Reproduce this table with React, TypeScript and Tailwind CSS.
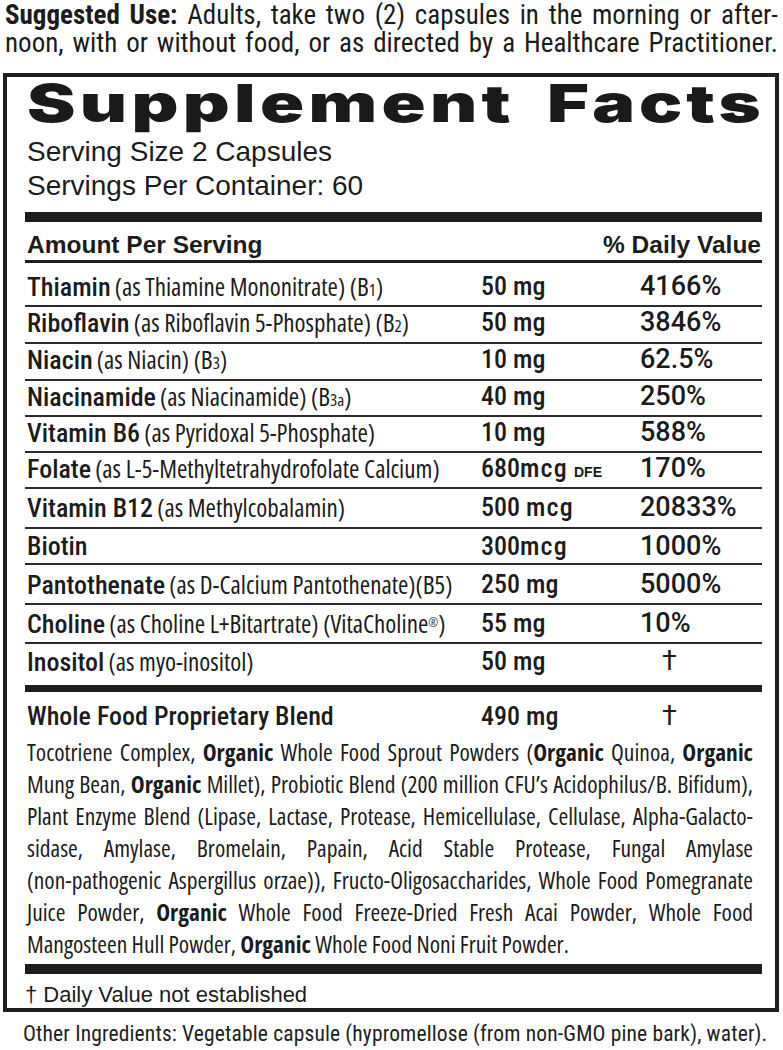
import React from "react";

type Row = {
  name: React.ReactNode;
  paren?: React.ReactNode;
  amt: React.ReactNode;
  dv: React.ReactNode;
  cls: string;
  dagger?: boolean;
};

const Sm = ({ children }: { children: React.ReactNode }) => (
  <span className="text-[17px]">{children}</span>
);

const Mcg = () => <span className="tracking-[1.2px]">mcg</span>;

const rows: Row[] = [
  {
    name: "Thiamin",
    paren: (
      <>
        (as Thiamine Mononitrate) (B<Sm>1</Sm>)
      </>
    ),
    amt: "50 mg",
    dv: "4166%",
    cls: "h-[44px] pt-[8px] border-b-2",
  },
  {
    name: "Riboflavin",
    paren: (
      <>
        (as Riboflavin 5-Phosphate) (B<Sm>2</Sm>)
      </>
    ),
    amt: "50 mg",
    dv: "3846%",
    cls: "h-[37px] pt-0 border-b-2",
  },
  {
    name: "Niacin",
    paren: (
      <>
        (as Niacin) (B<Sm>3</Sm>)
      </>
    ),
    amt: "10 mg",
    dv: "62.5%",
    cls: "h-[37px] pt-0 border-b-2",
  },
  {
    name: "Niacinamide",
    paren: (
      <>
        (as Niacinamide) (B<Sm>3a</Sm>)
      </>
    ),
    amt: "40 mg",
    dv: "250%",
    cls: "h-[36px] pt-0 border-b-2",
  },
  {
    name: "Vitamin B6",
    paren: "(as Pyridoxal 5-Phosphate)",
    amt: "10 mg",
    dv: "588%",
    cls: "h-[36px] pt-0 border-b-2",
  },
  {
    name: "Folate",
    paren: "(as L-5-Methyltetrahydrofolate Calcium)",
    amt: (
      <>
        680<Mcg />{" "}
        <span className="font-['Liberation_Sans',Arial,sans-serif] font-bold text-[14px]">DFE</span>
      </>
    ),
    dv: "170%",
    cls: "h-[36px] pt-0 border-b-2",
  },
  {
    name: "Vitamin B12",
    paren: "(as Methylcobalamin)",
    amt: (
      <>
        500 <Mcg />
      </>
    ),
    dv: "20833%",
    cls: "h-[40px] pt-[3px] border-b-2",
  },
  {
    name: "Biotin",
    amt: (
      <>
        300<Mcg />
      </>
    ),
    dv: "1000%",
    cls: "h-[36px] pt-[2px] border-b-2",
  },
  {
    name: "Pantothenate",
    paren: "(as D-Calcium Pantothenate)(B5)",
    amt: "250 mg",
    dv: "5000%",
    cls: "h-[40px] pt-[4px] border-b-2",
  },
  {
    name: "Choline",
    paren: (
      <>
        (as Choline L+Bitartrate) (VitaCholine
        <sup className="text-[12px]">®</sup>)
      </>
    ),
    amt: "55 mg",
    dv: "10%",
    cls: "h-[39px] pt-[3px] border-b-2",
  },
  {
    name: "Inositol",
    paren: "(as myo-inositol)",
    amt: "50 mg",
    dv: "†",
    dagger: true,
    cls: "h-[41px] pt-[2px]",
  },
];

const B = ({ children }: { children: React.ReactNode }) => (
  <span className="font-bold">{children}</span>
);

export default function App() {
  return (
    <div className="w-[783px] h-[1050px] overflow-hidden bg-white text-[#1c1c1c]">
      {/* Suggested use */}
      <div className="px-[5px] pt-[1px] font-['Roboto',sans-serif] font-stretch-[82%] text-[27px] leading-[28px]">
        <div className="text-justify [text-align-last:justify]">
          <span className="font-bold">Suggested Use:</span> Adults, take two (2) capsules in the morning or after-
        </div>
        <div className="text-justify [text-align-last:justify]">
          noon, with or without food, or as directed by a Healthcare Practitioner.
        </div>
      </div>

      {/* Box */}
      <div className="mt-[16px] ml-[3px] w-[776px] border-4 border-[#1e1e1e] pl-[18px] pr-[13px] flex flex-col">
        <div className="mt-[1px] h-[52px] pl-[2px] flex justify-between font-['Inter',sans-serif] font-black text-[52px] leading-[52px] text-[#1a1a1a]">
          <span className="inline-block origin-left scale-x-[1.4] tracking-[3.1px]">Supplement</span>
          <span className="inline-block origin-right scale-x-[1.38] tracking-[2.9px] -mr-[3px]">Facts</span>
        </div>

        <div className="mt-[5px] pl-[2px] font-['Liberation_Sans',Arial,sans-serif] text-[28px] leading-[34px]">
          <div>Serving Size 2 Capsules</div>
          <div>Servings Per Container: 60</div>
        </div>

        <div className="mt-[9px] h-[10px] bg-[#1e1e1e]" />

        <div className="h-[38px] pt-[7px] pl-[2px] flex justify-between font-['Liberation_Sans',Arial,sans-serif] font-bold text-[24.5px] leading-[31px]">
          <span>Amount Per Serving</span>
          <span className="pr-[1px]">% Daily Value</span>
        </div>
        <div className="h-[3px] bg-[#1e1e1e]" />

        {rows.map((r, i) => (
          <div key={i} className={`flex leading-[30px] border-[#2b2b2b] ${r.cls}`}>
            <div className="w-[456px] pl-[2px] whitespace-nowrap">
              <span className="font-['Roboto',sans-serif] font-medium font-stretch-semi-condensed text-[26px]">
                {r.name}
              </span>
              {r.paren ? (
                <>
                  {" "}
                  <span className="font-['Open_Sans',sans-serif] font-stretch-condensed text-[25px]">
                    {r.paren}
                  </span>
                </>
              ) : null}
            </div>
            <div className="w-[159px] whitespace-nowrap font-['Roboto',sans-serif] font-medium font-stretch-semi-condensed text-[26px]">
              {r.amt}
            </div>
            <div
              className={
                r.dagger
                  ? "pl-[22px] font-['Roboto',sans-serif] font-normal text-[27px]"
                  : "font-['Roboto',sans-serif] font-medium text-[27px]"
              }
            >
              {r.dv}
            </div>
          </div>
        ))}

        <div className="h-[7px] bg-[#1e1e1e]" />

        <div className="flex h-[44px] pt-[9px] leading-[30px]">
          <div className="w-[456px] pl-[2px] whitespace-nowrap font-['Roboto',sans-serif] font-medium font-stretch-semi-condensed text-[26px]">
            Whole Food Proprietary Blend
          </div>
          <div className="w-[159px] whitespace-nowrap font-['Roboto',sans-serif] font-medium font-stretch-semi-condensed text-[26px]">
            490 mg
          </div>
          <div className="pl-[22px] font-['Roboto',sans-serif] font-normal text-[27px]">†</div>
        </div>

        <div className="pl-[2px] pr-[9px] font-['Open_Sans',sans-serif] font-stretch-condensed text-[23.5px] leading-[32px]">
          <div className="text-justify [text-align-last:justify]">
            Tocotriene Complex, <B>Organic</B> Whole Food Sprout Powders (<B>Organic</B> Quinoa, <B>Organic</B>
          </div>
          <div className="text-justify [text-align-last:justify]">
            Mung Bean, <B>Organic</B> Millet), Probiotic Blend (200 million CFU’s Acidophilus/B. Bifidum),
          </div>
          <div className="text-justify [text-align-last:justify]">
            Plant Enzyme Blend (Lipase, Lactase, Protease, Hemicellulase, Cellulase, Alpha-Galacto-
          </div>
          <div className="text-justify [text-align-last:justify]">
            sidase, Amylase, Bromelain, Papain, Acid Stable Protease, Fungal Amylase
          </div>
          <div className="text-justify [text-align-last:justify]">
            (non-pathogenic Aspergillus orzae)), Fructo-Oligosaccharides, Whole Food Pomegranate
          </div>
          <div className="text-justify [text-align-last:justify]">
            Juice Powder, <B>Organic</B> Whole Food Freeze-Dried Fresh Acai Powder, Whole Food
          </div>
          <div>
            Mangosteen Hull Powder, <B>Organic</B> Whole Food Noni Fruit Powder.
          </div>
        </div>

        <div className="mt-[4px] h-[10px] bg-[#1e1e1e]" />

        <div className="mt-[8px] h-[26px] leading-[26px] font-['Liberation_Sans',Arial,sans-serif] text-[22px]">
          † Daily Value not established
        </div>
      </div>

      <div className="mt-[10px] pl-[23px] whitespace-nowrap font-['Roboto',sans-serif] font-stretch-[85%] tracking-[0.15px] text-[21.5px] leading-[24px] text-[#222]">
        Other Ingredients: Vegetable capsule (hypromellose (from non-GMO pine bark), water).
      </div>
    </div>
  );
}
